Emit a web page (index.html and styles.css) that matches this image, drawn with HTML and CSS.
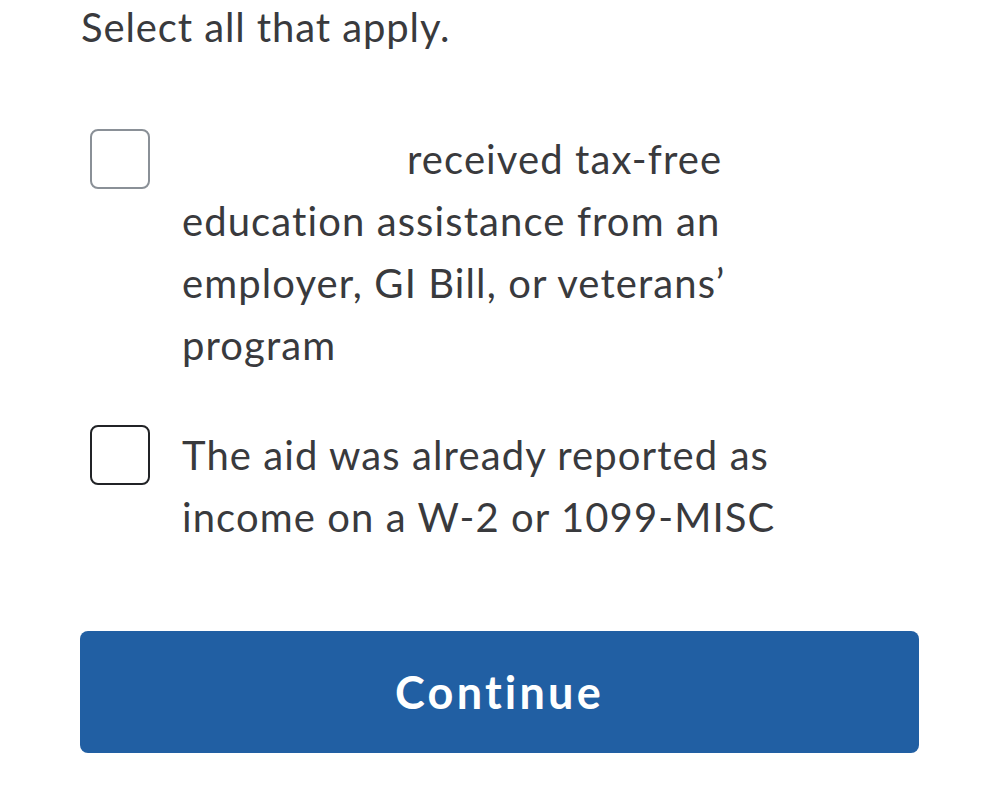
FILE: index.html
```html
<!DOCTYPE html>
<html>
<head>
  <title>Education assistance</title>
  <link rel="stylesheet" href="styles.css">
</head>
<body>

<div class="page">
  <p class="prompt">Select all that apply.</p>

  <label class="option">
    <span class="box box-muted"></span>
    <span class="option-text"><span class="redacted"></span>received tax-free education assistance from an employer, GI Bill, or veterans’ program</span>
  </label>

  <label class="option">
    <span class="box"></span>
    <span class="option-text">The aid was already reported as income on a W-2 or 1099-MISC</span>
  </label>

  <button class="continue">Continue</button>
</div>

</body>
</html>
```

FILE: styles.css
```css
body {
  margin: 0;
  padding: 0;
  background: #fff;
  font-family: Lato, 'Noto Sans', sans-serif;
  font-variant-ligatures: none;
  color: #393a3d;
}
.page {
  padding: 0 80px;
  display: flex;
  flex-direction: column;
}
.prompt {
  margin: 0 0 75px 1px;
  font-size: 40px;
  line-height: 54px;
  letter-spacing: 0.9px;
}
.option {
  display: flex;
  gap: 32px;
  margin-left: 10px;
  margin-bottom: 49px;
  cursor: pointer;
}
.box {
  flex: none;
  width: 56px;
  height: 56px;
  border: 2px solid #212326;
  border-radius: 8px;
}
.box-muted {
  border-color: #8a9097;
}
.option-text {
  width: 640px;
  font-size: 40px;
  line-height: 62px;
  letter-spacing: 1.1px;
  margin-top: -1px;
}
.redacted {
  display: inline-block;
  width: 225px;
}
.continue {
  margin-top: 34px;
  height: 122px;
  border: none;
  border-radius: 8px;
  background-color: #215fa3;
  color: #fff;
  font-family: Lato, 'Noto Sans', sans-serif;
  font-variant-ligatures: none;
  font-weight: bold;
  font-size: 45px;
  letter-spacing: 3.2px;
  cursor: pointer;
}
```
